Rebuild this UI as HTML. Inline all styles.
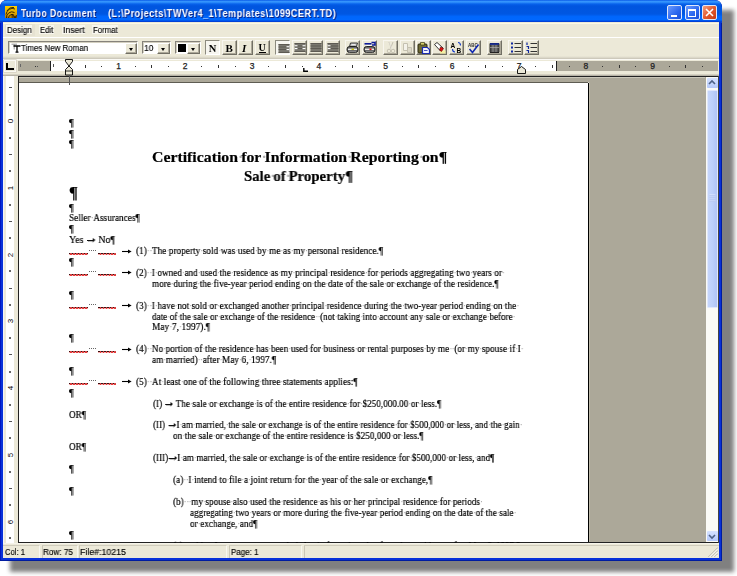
<!DOCTYPE html>
<html><head><meta charset="utf-8"><style>
html,body{margin:0;padding:0;width:737px;height:576px;overflow:hidden;background:#fff;position:relative}
#doctext,.t,.btn svg,.cb svg{will-change:transform}
div{box-sizing:border-box}
.abs{position:absolute}
.t{position:absolute;white-space:pre;line-height:0;transform-origin:0 0}
#doctext .t{-webkit-text-stroke:0.2px #000}
#doctext .t .d{-webkit-text-stroke:0}
.ui{-webkit-text-stroke:0.15px #000}
.tt{text-shadow:1px 1px 0 #0a1f80;letter-spacing:0.5px}
.d{color:#9a9a9a;letter-spacing:-0.6px}
.ttl .d{letter-spacing:-2px;color:#b0b0b0}
.ar{position:relative;color:transparent}
.ar:before{content:'';position:absolute;left:1px;right:2px;top:5.6px;height:1.3px;background:#111}
.ar:after{content:'';position:absolute;right:0.3px;top:3.8px;border-left:3px solid #111;border-top:2.4px solid transparent;border-bottom:2.4px solid transparent}
#shadow{position:absolute;left:10px;top:10px;width:724px;height:562px;background:#808080;filter:blur(2px)}
#win{position:absolute;left:0;top:0;width:722px;height:561px;background:#0831d9;box-shadow:inset -1px -1px 0 #001ca0, inset 1px 0 0 #0016c0;border-radius:7px 7px 0 0;overflow:hidden}
#title{position:absolute;left:0;top:0;width:722px;height:22.5px;border-radius:7px 7px 0 0;
  background:linear-gradient(#0a5ae8 0px,#3a9cff 1.7px,#0762ec 4px,#0055df 6px,#0057e2 14px,#0066fc 16.5px,#0068ff 20px,#0044da 21.2px,#0a3ad0 22.5px)}
#client{position:absolute;left:3px;top:22px;width:715.5px;height:535.5px;background:#ece9d8}
.tbtn{position:absolute;top:5px;width:15px;height:15px;border:1px solid #dfe8fb;border-radius:2px;
  background:linear-gradient(135deg,#6b9bff 0%,#2a66ee 60%,#1b4fd8 100%)}
.menu{position:absolute;height:9px;background:#f8f6ee}
.cb{position:absolute;top:41px;height:13px;background:#fff;border-top:1px solid #85827a;border-left:1px solid #85827a;border-right:1px solid #fff;border-bottom:1px solid #fff;box-shadow:inset 1px 1px 0 #d4d0c0}
.cbb{position:absolute;top:0.5px;right:0;width:12.5px;height:11.5px;background:#ece9d8;border-right:1px solid #716f64;border-bottom:1px solid #716f64;border-top:1px solid #fff;border-left:1px solid #fff;box-shadow:inset -1px -1px 0 #aca899}
.cbb:after{content:'';position:absolute;left:3px;top:4px;border-left:2.5px solid transparent;border-right:2.5px solid transparent;border-top:3px solid #000}
.btn{position:absolute;top:40px;width:15px;height:15px;background:#ece9d8;border-top:1px solid #f8f6ee;border-left:1px solid #f8f6ee;border-right:1px solid #716f64;border-bottom:1px solid #716f64;box-shadow:inset -1px -1px 0 #aca899}
.btn.on{background:#f7f6f0;border-top:1px solid #8c8a7e;border-left:1px solid #8c8a7e;border-right:1px solid #fff;border-bottom:1px solid #fff;box-shadow:none}
.btn svg{position:absolute;left:0;top:0}
.rn{position:absolute;top:61.5px;width:6px;text-align:center;font:8.5px 'Liberation Sans',sans-serif;line-height:8px;color:#222;-webkit-text-stroke:0.25px #222}
.rtk{position:absolute;top:64.5px;width:1px;height:3px;background:#333}
.rdot{position:absolute;top:65.5px;width:1px;height:1px;background:#333}
.vn{position:absolute;left:7px;width:7px;height:6px;font:8px 'Liberation Sans',sans-serif;line-height:6px;text-align:center;color:#000;transform:rotate(-90deg)}
.vtk{position:absolute;left:9px;width:3px;height:1px;background:#555}
.vdot{position:absolute;left:9px;width:2px;height:2px;background:#666}
.ul{position:absolute;height:1px;background:repeating-linear-gradient(90deg,#3a1010 0 1.5px,#d04848 1.5px 3px)}
.sq{position:absolute;height:1.3px;background:repeating-linear-gradient(90deg,#f8a8a8 0 1.5px,#e83838 1.5px 3px)}
.dots{position:absolute;width:8px;height:1px;background:repeating-linear-gradient(90deg,#666 0 1px,transparent 1px 2px)}
.arr{position:absolute;width:10px;height:5px}
.arr svg{display:block}
.sb{position:absolute;top:544.5px;height:13px;border-top:1px solid #d0ccbc;border-left:1px solid #cbc7b7;border-right:1px solid #f8f7f0}
</style></head><body>
<div id="shadow"></div>
<div id="win">
 <div id="title"></div>
 <div class="abs" style="left:5px;top:6px;width:12px;height:12px;background:linear-gradient(#ffd200,#e0a800 60%,#b07800)">
  <svg width="12" height="12" viewBox="0 0 12 12" style="display:block"><g fill="none" stroke="#2a1c00" stroke-width="0.9"><path d="M1.5 12A5.5 5.5 0 0 1 9.5 6.5"/><path d="M1 8.5A6.5 7 0 0 1 10 3"/><path d="M3.5 12A3.5 3.5 0 0 1 8.5 9"/><path d="M2 5A7 7 0 0 1 9 1.5"/></g><path d="M6 8.5H8.5M7.2 8.5V12M8.2 9L9.2 12L10 9.8L10.8 12L11.8 9" stroke="#2a1c00" stroke-width="0.8" fill="none"/></svg>
 </div>
 <div class="tbtn" style="left:667px"><div class="abs" style="left:3px;top:8.7px;width:5.5px;height:2px;background:#fff"></div></div>
 <div class="tbtn" style="left:684.5px"><div class="abs" style="left:2.5px;top:2.5px;width:8px;height:8px;border:1px solid #fff;border-top-width:2px"></div></div>
 <div class="tbtn" style="left:702px;background:linear-gradient(135deg,#f0a080 0%,#e25a30 50%,#c53a12 100%)">
  <svg width="13" height="13" viewBox="0 0 13 13" style="position:absolute;left:0;top:0"><path d="M3 3L10 10M10 3L3 10" stroke="#fff" stroke-width="1.6"/></svg>
 </div>
 <div id="client">
  <!-- menubar (client coords: x-3, y-22) -->
  <div class="abs" style="left:0;top:0.5px;width:715.5px;height:1.3px;background:#fdf9e4"></div>
  <div class="abs" style="left:2px;top:1.5px;width:29.5px;height:12.5px;background:#e6e2d2"></div>
  <div class="menu" style="left:3px;top:3px;width:26px"></div>
  <div class="menu" style="left:36px;top:3px;width:15px"></div>
  <div class="menu" style="left:59px;top:3px;width:23px"></div>
  <div class="menu" style="left:89px;top:3px;width:26px"></div>
  <div class="abs" style="left:0;top:14.5px;width:715.5px;height:1px;background:#fff"></div>
  <!-- toolbar bottom -->
  <div class="abs" style="left:0;top:33.5px;width:715.5px;height:2.5px;background:linear-gradient(#ece9d8,#d6d2c4)"></div>
  <div class="abs" style="left:0;top:36px;width:715.5px;height:1px;background:#cdc9bb"></div>
  <div class="abs" style="left:0;top:37px;width:715.5px;height:1px;background:#faf9f4"></div>
 </div>
 <!-- combos -->
 <div class="cb" style="left:8px;width:130px"><div class="cbb"></div>
   <svg width="10" height="10" viewBox="0 0 10 10" style="position:absolute;left:1.5px;top:0.5px"><path d="M0.5 1.2H6M3.2 1.2V6.5" stroke="#8a8a8a" stroke-width="0.9" fill="none"/><path d="M2.5 3H9.5M6 3V9.2M4.5 9.2H7.5" stroke="#000" stroke-width="1.3" fill="none"/></svg>
 </div>
 <div class="cb" style="left:141.5px;width:29px"><div class="cbb"></div></div>
 <div class="cb" style="left:174.5px;width:26px"><div class="abs" style="left:2px;top:1.5px;width:8px;height:8px;background:#000"></div><div class="cbb"></div></div>
 <!-- toolbar buttons -->
 <div class="btn on" style="left:205px"><svg width="13" height="13"><text x="2.8" y="11.2" font-family="Liberation Serif" font-size="10.5" font-weight="bold">N</text></svg></div>
 <div class="btn" style="left:221.5px"><svg width="13" height="13"><text x="2.5" y="11" font-family="Liberation Serif" font-size="11" font-weight="bold">B</text></svg></div>
 <div class="btn" style="left:238px"><svg width="13" height="13"><text x="3" y="11" font-family="Liberation Serif" font-size="11" font-weight="bold" font-style="italic">I</text></svg></div>
 <div class="btn" style="left:254.5px"><svg width="13" height="13"><text x="2.5" y="9.8" font-family="Liberation Serif" font-size="10" font-weight="bold">U</text><path d="M3 11.5H10" stroke="#000" stroke-width="1"/></svg></div>
 <div class="btn on" style="left:275px"><div style="position:absolute;left:0.5px;top:1px"><svg width="13" height="13"><rect x="1.5" y="2" width="11" height="9" fill="#7a7870"/><path d="M1.5 2.5H12.5M1.5 5H12.5M1.5 7.5H12.5M1.5 10.5H12.5" stroke="#55534b" stroke-width="0.8"/><rect x="9.5" y="4.2" width="3" height="1.1" fill="#fff"/><rect x="9.5" y="7.0" width="3" height="1.1" fill="#fff"/></svg></div></div>
 <div class="btn" style="left:291.5px"><svg width="13" height="13"><rect x="1.5" y="2" width="11" height="9" fill="#7a7870"/><path d="M1.5 2.5H12.5M1.5 5H12.5M1.5 7.5H12.5M1.5 10.5H12.5" stroke="#55534b" stroke-width="0.8"/><rect x="9.5" y="4.2" width="3" height="1.1" fill="#fff"/><rect x="1.5" y="4.2" width="3" height="1.1" fill="#fff"/><rect x="9.5" y="7.0" width="3" height="1.1" fill="#fff"/><rect x="1.5" y="7.0" width="3" height="1.1" fill="#fff"/></svg></div>
 <div class="btn" style="left:308px"><svg width="13" height="13"><rect x="1.5" y="2" width="11" height="9" fill="#7a7870"/><path d="M1.5 2.5H12.5M1.5 5H12.5M1.5 7.5H12.5M1.5 10.5H12.5" stroke="#55534b" stroke-width="0.8"/></svg></div>
 <div class="btn" style="left:324.5px"><svg width="13" height="13"><rect x="1.5" y="2" width="11" height="9" fill="#7a7870"/><path d="M1.5 2.5H12.5M1.5 5H12.5M1.5 7.5H12.5M1.5 10.5H12.5" stroke="#55534b" stroke-width="0.8"/><rect x="1.5" y="4.2" width="3" height="1.1" fill="#fff"/><rect x="1.5" y="7.0" width="3" height="1.1" fill="#fff"/></svg></div>
 <div class="btn" style="left:345px"><svg width="13" height="13"><path d="M4.5 2L11.5 2L10.5 5.5L3.5 5.5Z" fill="#bdbdbd" stroke="#2a2a2a" stroke-width="0.9"/><path d="M5.5 3.5H9.5" stroke="#fff" stroke-width="0.7"/><rect x="1" y="5.5" width="11" height="6" rx="2.6" fill="#6a6a6a" stroke="#1a1a1a" stroke-width="0.9"/><path d="M2 8.3H11" stroke="#f4f4f4" stroke-width="1.3"/><path d="M5.5 8.3H8" stroke="#c8c000" stroke-width="1.3"/><path d="M3 10.8H10" stroke="#9a9a9a" stroke-width="0.8"/></svg></div>
 <div class="btn" style="left:361.5px"><svg width="13" height="13"><path d="M1.5 2.8H8.5" stroke="#0c1a9a" stroke-width="1.6"/><path d="M8.5 1.5H12V4H9" stroke="#0c1a9a" stroke-width="1.5" fill="none"/><path d="M3.5 4.5H8" stroke="#fff" stroke-width="0.8"/><rect x="1" y="5.5" width="11" height="6" rx="2.6" fill="#6a6a6a" stroke="#1a1a1a" stroke-width="0.9"/><path d="M2 8.3H11" stroke="#f4f4f4" stroke-width="1.3"/><path d="M6.5 8.3H8.5" stroke="#e00000" stroke-width="1.5"/><path d="M3 10.8H10" stroke="#9a9a9a" stroke-width="0.8"/></svg></div>
 <div class="btn" style="left:383px"><svg width="13" height="13"><path d="M5 1L7.5 7.5M9 1L6.5 7.5" stroke="#c4c0b0" stroke-width="1"/><circle cx="5" cy="10" r="1.8" fill="none" stroke="#c4c0b0" stroke-width="1"/><circle cx="9" cy="10" r="1.8" fill="none" stroke="#c4c0b0" stroke-width="1"/><path d="M5.5 1.5L8 8" stroke="#fff" stroke-width="0.5"/></svg></div>
 <div class="btn" style="left:399.5px"><svg width="13" height="13"><path d="M2.5 2.5H6.5V9.5H2.5Z" fill="#f4f2ea" stroke="#c4c0b0"/><path d="M6.5 6.5H10.5V11.5H6.5Z" fill="#dcd8c8" stroke="#c4c0b0"/></svg></div>
 <div class="btn" style="left:416px"><svg width="13" height="13"><rect x="1" y="3" width="9" height="9" rx="1" fill="#6e6a36" stroke="#1e1c08" stroke-width="0.9"/><path d="M3.5 1.5H7.5V4H3.5Z" fill="#d8d070" stroke="#3a3610" stroke-width="0.7"/><path d="M5.5 6.5H10.5L12.5 8.5V12.5H5.5Z" fill="#f4f4ff" stroke="#1a2ab0" stroke-width="1.2"/><path d="M7 9.5H10.5" stroke="#1a2ab0" stroke-width="0.8"/></svg></div>
 <div class="btn" style="left:432px"><svg width="13" height="13"><path d="M7 9.5H12.5V12.5H7Z" fill="#f4f0a0"/><path d="M1.5 3.5L4 1.5L10 7L7.5 10Z" fill="#fff" stroke="#222" stroke-width="0.9"/><path d="M7.5 6L10.5 7.5L8.5 10.5L6.5 9Z" fill="#e01010" stroke="#600" stroke-width="0.6"/></svg></div>
 <div class="btn" style="left:449px"><svg width="13" height="13"><text x="0.5" y="6.5" font-family="Liberation Sans" font-size="6.5" font-weight="bold">A</text><text x="6.5" y="12" font-family="Liberation Sans" font-size="6.5" font-weight="bold">B</text><path d="M8 1.5Q10.5 1.5 10.5 4.5M2.5 8Q2.5 11 5 11" stroke="#1038c8" fill="none" stroke-width="1.1"/></svg></div>
 <div class="btn" style="left:466px"><svg width="13" height="13"><text x="1" y="5.5" font-family="Liberation Sans" font-size="4.5" font-weight="bold" fill="#333">ABC</text><path d="M2.5 8L5.5 11.5L11.5 3.5" stroke="#1028b0" stroke-width="1.6" fill="none"/></svg></div>
 <div class="btn" style="left:487px"><svg width="13" height="13"><path d="M2 2.5H11V11.5H2Z" fill="#555" stroke="#222"/><path d="M2 3H11" stroke="#1028a0" stroke-width="1.5"/><path d="M5 4V11M8 4V11M2 6.5H11" stroke="#bbb" stroke-width="0.6"/></svg></div>
 <div class="btn" style="left:507.5px"><svg width="13" height="13"><path d="M2 2.5H4M2 6.5H4M2 10.5H4" stroke="#1028a0" stroke-width="2"/><path d="M5.5 2.5H12M5.5 6.5H12M5.5 10.5H12" stroke="#333" stroke-width="1"/></svg></div>
 <div class="btn" style="left:524px"><svg width="13" height="13"><path d="M2 1.5V4M1.5 5.5H3.5V8M1.5 9.5H3.5V12" stroke="#1028a0" stroke-width="1.2" fill="none"/><path d="M5.5 2.5H12M5.5 6.5H12M5.5 10.5H12" stroke="#333" stroke-width="1"/></svg></div>

 <!-- ruler -->
 <div class="abs" style="left:4px;top:60px;width:12px;height:12px;background:#ece9d8;border:1px solid #fbfaf4;box-shadow:0 0 0 0.6px #cfcbbb">
   <div class="abs" style="left:1.25px;top:1.8px;width:1.5px;height:7px;background:#000"></div>
   <div class="abs" style="left:1.25px;top:7.2px;width:7.5px;height:1.6px;background:#000"></div>
 </div>
 <div class="abs" style="left:3px;top:73.5px;width:715.5px;height:2.5px;background:linear-gradient(#e4e0d0,#a8a498)"></div>
 <div class="abs" style="left:17.5px;top:61px;width:700px;height:9.5px;background:#fff"></div>
 <div class="abs" style="left:17.5px;top:61px;width:33px;height:9.5px;background:#aca899"></div>
 <div class="abs" style="left:50px;top:61px;width:1px;height:9.5px;background:#222"></div>
 <div class="abs" style="left:555.5px;top:61px;width:162px;height:9.5px;background:#aca899"></div>
 <div class="abs" style="left:555.5px;top:61px;width:1px;height:9.5px;background:#222"></div>
 <div class="abs" style="left:20px;top:64px;width:1px;height:3px;background:#666"></div>
 <div class="abs" style="left:36.5px;top:65.5px;width:1px;height:1px;background:#555"></div>
 <div class="abs" style="left:53px;top:63.5px;width:1px;height:3.5px;background:#555"></div>
 <div class="rdot" style="left:34.6px"></div>
<div class="rdot" style="left:67.9px"></div>
<div class="rtk" style="left:84.6px"></div>
<div class="rdot" style="left:101.3px"></div>
<div class="rn" style="left:115.5px">1</div>
<div class="rdot" style="left:134.7px"></div>
<div class="rtk" style="left:151.4px"></div>
<div class="rdot" style="left:168.1px"></div>
<div class="rn" style="left:182.2px">2</div>
<div class="rdot" style="left:201.4px"></div>
<div class="rtk" style="left:218.1px"></div>
<div class="rdot" style="left:234.8px"></div>
<div class="rn" style="left:249.0px">3</div>
<div class="rdot" style="left:268.2px"></div>
<div class="rtk" style="left:284.9px"></div>
<div class="rdot" style="left:301.6px"></div>
<div class="rn" style="left:315.8px">4</div>
<div class="rdot" style="left:334.9px"></div>
<div class="rtk" style="left:351.6px"></div>
<div class="rdot" style="left:368.3px"></div>
<div class="rn" style="left:382.5px">5</div>
<div class="rdot" style="left:401.7px"></div>
<div class="rtk" style="left:418.4px"></div>
<div class="rdot" style="left:435.1px"></div>
<div class="rn" style="left:449.2px">6</div>
<div class="rdot" style="left:468.4px"></div>
<div class="rtk" style="left:485.1px"></div>
<div class="rdot" style="left:501.8px"></div>
<div class="rn" style="left:516.0px">7</div>
<div class="rdot" style="left:535.2px"></div>
<div class="rtk" style="left:551.9px"></div>
<div class="rdot" style="left:568.6px"></div>
<div class="rn" style="left:582.8px">8</div>
<div class="rdot" style="left:601.9px"></div>
<div class="rtk" style="left:618.6px"></div>
<div class="rdot" style="left:635.3px"></div>
<div class="rn" style="left:649.5px">9</div>
<div class="rdot" style="left:668.7px"></div>
<div class="rtk" style="left:685.4px"></div>
<div class="rdot" style="left:702.1px"></div>
 <!-- indent markers -->
 <svg class="abs" style="left:65px;top:59px" width="8" height="17" viewBox="0 0 8 17"><path d="M0.5 0.5H7.5V2.5L4 7L7.5 10.5V16H0.5V10.5L4 7L0.5 2.5Z" fill="#ece9d8" stroke="#000" stroke-width="0.9"/><path d="M0.5 12H7.5" stroke="#000" stroke-width="0.8"/></svg>
 <svg class="abs" style="left:517px;top:66px" width="9" height="8" viewBox="0 0 9 8"><path d="M0.5 7.5V3.5L4.5 0.5L8.5 3.5V7.5Z" fill="#ece9d8" stroke="#000" stroke-width="0.9"/></svg>
 <svg class="abs" style="left:302.5px;top:67.5px" width="5" height="5" viewBox="0 0 5 5"><path d="M0.8 0V3.2H5" stroke="#000" stroke-width="1.4" fill="none"/></svg>

 <!-- doc area -->
 <div class="abs" style="left:3px;top:76px;width:715.5px;height:467px;background:#aca899"></div>
 <div class="abs" style="left:3px;top:76px;width:15px;height:467px;background:#ece9d8"></div>
 <div class="abs" style="left:3px;top:76px;width:0.8px;height:467px;background:#f4f4f8"></div>
 <div class="abs" style="left:6px;top:76px;width:8px;height:467px;background:#fff"></div>
 <div class="vtk" style="top:87.3px"></div>
<div class="vdot" style="top:103.5px"></div>
<div class="vn" style="top:118.2px">0</div>
<div class="vdot" style="top:136.9px"></div>
<div class="vtk" style="top:154.1px"></div>
<div class="vdot" style="top:170.3px"></div>
<div class="vn" style="top:184.9px">1</div>
<div class="vdot" style="top:203.6px"></div>
<div class="vtk" style="top:220.8px"></div>
<div class="vdot" style="top:237.0px"></div>
<div class="vn" style="top:251.7px">2</div>
<div class="vdot" style="top:270.4px"></div>
<div class="vtk" style="top:287.6px"></div>
<div class="vdot" style="top:303.8px"></div>
<div class="vn" style="top:318.4px">3</div>
<div class="vdot" style="top:337.1px"></div>
<div class="vtk" style="top:354.3px"></div>
<div class="vdot" style="top:370.5px"></div>
<div class="vn" style="top:385.2px">4</div>
<div class="vdot" style="top:403.9px"></div>
<div class="vtk" style="top:421.1px"></div>
<div class="vdot" style="top:437.3px"></div>
<div class="vn" style="top:451.9px">5</div>
<div class="vdot" style="top:470.6px"></div>
<div class="vtk" style="top:487.8px"></div>
<div class="vdot" style="top:504.0px"></div>
<div class="vn" style="top:518.7px">6</div>
<div class="vdot" style="top:537.4px"></div>
 <div class="abs" style="left:18px;top:76px;width:700.5px;height:1px;background:#222"></div>
 <div class="abs" style="left:18px;top:76px;width:1px;height:467px;background:#222"></div>
 <div class="abs" style="left:19px;top:77px;width:686px;height:1px;background:#c9c6b8"></div>
 <div class="abs" style="left:19px;top:82px;width:569px;height:1px;background:#5e5c52"></div>
 <div class="abs" style="left:19px;top:83px;width:569px;height:460px;background:#fff;overflow:hidden"></div>
 <div class="abs" style="left:588px;top:82px;width:1px;height:461px;background:#000"></div>
 <div class="abs" style="left:589px;top:83px;width:1px;height:460px;background:#bcb8a8"></div>
 <div class="abs" style="left:588px;top:82px;width:1px;height:1px;background:#d8d4c8"></div>
 <div class="abs" style="left:69px;top:75px;width:1px;height:10px;background:#555"></div>
 <!-- scrollbar -->
 <div class="abs" style="left:705.5px;top:77px;width:13px;height:466px;background:#fafaf6"></div>
 <div class="abs" style="left:707px;top:78px;width:10.5px;height:10px;background:linear-gradient(#d6e2ff,#b4c8fa);border-radius:1px">
   <svg width="10" height="10" viewBox="0 0 10 10" style="position:absolute;left:0;top:0"><path d="M2 6L5 3L8 6" stroke="#4d6185" stroke-width="1.6" fill="none"/></svg>
 </div>
 <div class="abs" style="left:707px;top:89.5px;width:10.5px;height:218px;background:linear-gradient(90deg,#c6d6fc,#bcd0fa 50%,#b0c4f6);border:1px solid #e0e8fc;border-radius:1px"></div>
 <svg class="abs" style="left:709px;top:194px" width="7" height="8" viewBox="0 0 7 8"><path d="M0.5 1H6.5M0.5 3H6.5M0.5 5H6.5M0.5 7H6.5" stroke="#eef3ff" stroke-width="0.8"/><path d="M0.5 1.8H6.5M0.5 3.8H6.5M0.5 5.8H6.5M0.5 7.8H6.5" stroke="#9cb2ea" stroke-width="0.6"/></svg>
 <div class="abs" style="left:707px;top:531px;width:10.5px;height:10px;background:linear-gradient(#d6e2ff,#b4c8fa);border-radius:1px">
   <svg width="10" height="10" viewBox="0 0 10 10" style="position:absolute;left:0;top:0"><path d="M2 4L5 7L8 4" stroke="#4d6185" stroke-width="1.6" fill="none"/></svg>
 </div>
 <div class="abs" style="left:18px;top:542px;width:700.5px;height:1px;background:#222"></div>
 <div class="abs" style="left:717.5px;top:76px;width:1px;height:467px;background:#444"></div>
 <!-- status bar -->
 <div class="abs" style="left:3px;top:543px;width:715.5px;height:14.5px;background:#ece9d8"></div>
 <div class="abs" style="left:3px;top:543px;width:715.5px;height:1px;background:#f6f4ea"></div>
 <div class="sb" style="left:3px;width:37px;border-left:none"></div>
 <div class="sb" style="left:42px;width:35.5px"></div>
 <div class="sb" style="left:79px;width:147.5px"></div>
 <div class="sb" style="left:228.5px;width:73.5px"></div>
 <div class="sb" style="left:304px;width:414.5px;border-right:none"></div>
 <svg class="abs" style="left:707px;top:546px" width="11" height="11" viewBox="0 0 11 11"><g stroke-width="1"><path d="M11 1.5L1.5 11" stroke="#a8a494"/><path d="M11 2.5L2.5 11" stroke="#fff"/><path d="M11 4.5L4.5 11" stroke="#a8a494"/><path d="M11 5.5L5.5 11" stroke="#fff"/><path d="M11 7.5L7.5 11" stroke="#a8a494"/><path d="M11 8.5L8.5 11" stroke="#fff"/></g></svg>
</div>
<div id="doctext" style="position:absolute;left:0;top:0;width:588px;height:543px;overflow:hidden">
<div class="ul" style="left:69px;top:253px;width:19.0px"></div>
<div class="sq" style="left:69px;top:254px;width:19.0px"></div>
<div class="ul" style="left:97.7px;top:253px;width:17.9px"></div>
<div class="sq" style="left:97.7px;top:254px;width:17.9px"></div>
<div class="dots" style="left:89px;top:249.5px"></div>
<div class="arr" style="left:121.5px;top:248.5px"><svg width="10" height="5" viewBox="0 0 10 5"><path d="M0 2.5H8" stroke="#000" stroke-width="1.1"/><path d="M6 0.5L9.6 2.5L6 4.5Z" fill="#000"/></svg></div>
<div class="ul" style="left:69px;top:274px;width:19.0px"></div>
<div class="sq" style="left:69px;top:275px;width:19.0px"></div>
<div class="ul" style="left:97.7px;top:274px;width:17.9px"></div>
<div class="sq" style="left:97.7px;top:275px;width:17.9px"></div>
<div class="dots" style="left:89px;top:270.5px"></div>
<div class="arr" style="left:121.5px;top:269.5px"><svg width="10" height="5" viewBox="0 0 10 5"><path d="M0 2.5H8" stroke="#000" stroke-width="1.1"/><path d="M6 0.5L9.6 2.5L6 4.5Z" fill="#000"/></svg></div>
<div class="ul" style="left:69px;top:307px;width:19.0px"></div>
<div class="sq" style="left:69px;top:308px;width:19.0px"></div>
<div class="ul" style="left:97.7px;top:307px;width:17.9px"></div>
<div class="sq" style="left:97.7px;top:308px;width:17.9px"></div>
<div class="dots" style="left:89px;top:303.5px"></div>
<div class="arr" style="left:121.5px;top:302.5px"><svg width="10" height="5" viewBox="0 0 10 5"><path d="M0 2.5H8" stroke="#000" stroke-width="1.1"/><path d="M6 0.5L9.6 2.5L6 4.5Z" fill="#000"/></svg></div>
<div class="ul" style="left:69px;top:351px;width:19.0px"></div>
<div class="sq" style="left:69px;top:352px;width:19.0px"></div>
<div class="ul" style="left:97.7px;top:351px;width:17.9px"></div>
<div class="sq" style="left:97.7px;top:352px;width:17.9px"></div>
<div class="dots" style="left:89px;top:347.5px"></div>
<div class="arr" style="left:121.5px;top:346.5px"><svg width="10" height="5" viewBox="0 0 10 5"><path d="M0 2.5H8" stroke="#000" stroke-width="1.1"/><path d="M6 0.5L9.6 2.5L6 4.5Z" fill="#000"/></svg></div>
<div class="ul" style="left:69px;top:383px;width:19.0px"></div>
<div class="sq" style="left:69px;top:384px;width:19.0px"></div>
<div class="ul" style="left:97.7px;top:383px;width:17.9px"></div>
<div class="sq" style="left:97.7px;top:384px;width:17.9px"></div>
<div class="dots" style="left:89px;top:379.5px"></div>
<div class="arr" style="left:121.5px;top:378.5px"><svg width="10" height="5" viewBox="0 0 10 5"><path d="M0 2.5H8" stroke="#000" stroke-width="1.1"/><path d="M6 0.5L9.6 2.5L6 4.5Z" fill="#000"/></svg></div>
<div class="t" id="t0" style="left:69.00px;top:123.00px;font-size:10.5px;font-family:'Liberation Serif', serif;color:#000;">¶</div>
<div class="t" id="t1" style="left:69.00px;top:134.00px;font-size:10.5px;font-family:'Liberation Serif', serif;color:#000;">¶</div>
<div class="t" id="t2" style="left:69.00px;top:144.00px;font-size:10.5px;font-family:'Liberation Serif', serif;color:#000;">¶</div>
<div class="t ttl" id="t3" style="left:151.50px;top:157.05px;font-size:15px;font-family:'Liberation Serif', serif;color:#000;font-weight:bold;transform:scaleX(1.0537);">Certification<span class="d">·</span>for<span class="d">·</span>Information<span class="d">·</span>Reporting<span class="d">·</span>on¶</div>
<div class="t ttl" id="t4" style="left:244.00px;top:175.55px;font-size:15px;font-family:'Liberation Serif', serif;color:#000;font-weight:bold;transform:scaleX(0.9863);">Sale<span class="d">·</span>of<span class="d">·</span>Property¶</div>
<div class="t" id="t5" style="left:68.50px;top:193.16px;font-size:16.5px;font-family:'Liberation Serif', serif;color:#000;font-weight:bold;">¶</div>
<div class="t" id="t6" style="left:69.00px;top:208.00px;font-size:10.5px;font-family:'Liberation Serif', serif;color:#000;">¶</div>
<div class="t" id="t7" style="left:69.00px;top:218.00px;font-size:10.5px;font-family:'Liberation Serif', serif;color:#000;transform:scaleX(0.8839);">Seller<span class="d">·</span>Assurances¶</div>
<div class="t" id="t8" style="left:69.00px;top:229.00px;font-size:10.5px;font-family:'Liberation Serif', serif;color:#000;">¶</div>
<div class="t" id="t9" style="left:69.00px;top:240.00px;font-size:10.5px;font-family:'Liberation Serif', serif;color:#000;transform:scaleX(0.9460);">Yes <span class="ar">→</span> No¶</div>
<div class="t" id="t10" style="left:136.00px;top:251.00px;font-size:10.5px;font-family:'Liberation Serif', serif;color:#000;transform:scaleX(0.8814);">(1)<span class="d">·</span><span class="d">·</span>The<span class="d">·</span>property<span class="d">·</span>sold<span class="d">·</span>was<span class="d">·</span>used<span class="d">·</span>by<span class="d">·</span>me<span class="d">·</span>as<span class="d">·</span>my<span class="d">·</span>personal<span class="d">·</span>residence.¶</div>
<div class="t" id="t11" style="left:69.00px;top:262.00px;font-size:10.5px;font-family:'Liberation Serif', serif;color:#000;">¶</div>
<div class="t" id="t12" style="left:136.00px;top:273.00px;font-size:10.5px;font-family:'Liberation Serif', serif;color:#000;transform:scaleX(0.8745);">(2)<span class="d">·</span><span class="d">·</span>I<span class="d">·</span>owned<span class="d">·</span>and<span class="d">·</span>used<span class="d">·</span>the<span class="d">·</span>residence<span class="d">·</span>as<span class="d">·</span>my<span class="d">·</span>principal<span class="d">·</span>residence<span class="d">·</span>for<span class="d">·</span>periods<span class="d">·</span>aggregating<span class="d">·</span>two<span class="d">·</span>years<span class="d">·</span>or<span class="d">·</span></div>
<div class="t" id="t13" style="left:152.00px;top:284.00px;font-size:10.5px;font-family:'Liberation Serif', serif;color:#000;transform:scaleX(0.8722);">more<span class="d">·</span>during<span class="d">·</span>the<span class="d">·</span>five-year<span class="d">·</span>period<span class="d">·</span>ending<span class="d">·</span>on<span class="d">·</span>the<span class="d">·</span>date<span class="d">·</span>of<span class="d">·</span>the<span class="d">·</span>sale<span class="d">·</span>or<span class="d">·</span>exchange<span class="d">·</span>of<span class="d">·</span>the<span class="d">·</span>residence.¶</div>
<div class="t" id="t14" style="left:69.00px;top:295.00px;font-size:10.5px;font-family:'Liberation Serif', serif;color:#000;">¶</div>
<div class="t" id="t15" style="left:136.00px;top:306.00px;font-size:10.5px;font-family:'Liberation Serif', serif;color:#000;transform:scaleX(0.8752);">(3)<span class="d">·</span><span class="d">·</span>I<span class="d">·</span>have<span class="d">·</span>not<span class="d">·</span>sold<span class="d">·</span>or<span class="d">·</span>exchanged<span class="d">·</span>another<span class="d">·</span>principal<span class="d">·</span>residence<span class="d">·</span>during<span class="d">·</span>the<span class="d">·</span>two-year<span class="d">·</span>period<span class="d">·</span>ending<span class="d">·</span>on<span class="d">·</span>the<span class="d">·</span></div>
<div class="t" id="t16" style="left:152.00px;top:317.00px;font-size:10.5px;font-family:'Liberation Serif', serif;color:#000;transform:scaleX(0.8665);">date<span class="d">·</span>of<span class="d">·</span>the<span class="d">·</span>sale<span class="d">·</span>or<span class="d">·</span>exchange<span class="d">·</span>of<span class="d">·</span>the<span class="d">·</span>residence<span class="d">·</span><span class="d">·</span>(not<span class="d">·</span>taking<span class="d">·</span>into<span class="d">·</span>account<span class="d">·</span>any<span class="d">·</span>sale<span class="d">·</span>or<span class="d">·</span>exchange<span class="d">·</span>before<span class="d">·</span></div>
<div class="t" id="t17" style="left:152.00px;top:327.00px;font-size:10.5px;font-family:'Liberation Serif', serif;color:#000;transform:scaleX(0.8947);">May<span class="d">·</span>7,<span class="d">·</span>1997).¶</div>
<div class="t" id="t18" style="left:69.00px;top:338.00px;font-size:10.5px;font-family:'Liberation Serif', serif;color:#000;">¶</div>
<div class="t" id="t19" style="left:136.00px;top:349.00px;font-size:10.5px;font-family:'Liberation Serif', serif;color:#000;transform:scaleX(0.8763);">(4)<span class="d">·</span><span class="d">·</span>No<span class="d">·</span>portion<span class="d">·</span>of<span class="d">·</span>the<span class="d">·</span>residence<span class="d">·</span>has<span class="d">·</span>been<span class="d">·</span>used<span class="d">·</span>for<span class="d">·</span>business<span class="d">·</span>or<span class="d">·</span>rental<span class="d">·</span>purposes<span class="d">·</span>by<span class="d">·</span>me<span class="d">·</span><span class="d">·</span>(or<span class="d">·</span>my<span class="d">·</span>spouse<span class="d">·</span>if<span class="d">·</span>I<span class="d">·</span></div>
<div class="t" id="t20" style="left:152.00px;top:360.00px;font-size:10.5px;font-family:'Liberation Serif', serif;color:#000;transform:scaleX(0.8784);">am<span class="d">·</span>married)<span class="d">·</span><span class="d">·</span>after<span class="d">·</span>May<span class="d">·</span>6,<span class="d">·</span>1997.¶</div>
<div class="t" id="t21" style="left:69.00px;top:371.00px;font-size:10.5px;font-family:'Liberation Serif', serif;color:#000;">¶</div>
<div class="t" id="t22" style="left:136.00px;top:382.00px;font-size:10.5px;font-family:'Liberation Serif', serif;color:#000;transform:scaleX(0.8810);">(5)<span class="d">·</span><span class="d">·</span>At<span class="d">·</span>least<span class="d">·</span>one<span class="d">·</span>of<span class="d">·</span>the<span class="d">·</span>following<span class="d">·</span>three<span class="d">·</span>statements<span class="d">·</span>applies:¶</div>
<div class="t" id="t23" style="left:69.00px;top:393.00px;font-size:10.5px;font-family:'Liberation Serif', serif;color:#000;">¶</div>
<div class="t" id="t24" style="left:152.80px;top:404.00px;font-size:10.5px;font-family:'Liberation Serif', serif;color:#000;transform:scaleX(0.8712);">(I) <span class="ar">→</span> The<span class="d">·</span>sale<span class="d">·</span>or<span class="d">·</span>exchange<span class="d">·</span>is<span class="d">·</span>of<span class="d">·</span>the<span class="d">·</span>entire<span class="d">·</span>residence<span class="d">·</span>for<span class="d">·</span>$250,000.00<span class="d">·</span>or<span class="d">·</span>less.¶</div>
<div class="t" id="t25" style="left:69.00px;top:415.00px;font-size:10.5px;font-family:'Liberation Serif', serif;color:#000;transform:scaleX(0.8781);">OR¶</div>
<div class="t" id="t26" style="left:152.80px;top:425.00px;font-size:10.5px;font-family:'Liberation Serif', serif;color:#000;transform:scaleX(0.8616);">(II) <span class="ar">→</span>I<span class="d">·</span>am<span class="d">·</span>married,<span class="d">·</span>the<span class="d">·</span>sale<span class="d">·</span>or<span class="d">·</span>exchange<span class="d">·</span>is<span class="d">·</span>of<span class="d">·</span>the<span class="d">·</span>entire<span class="d">·</span>residence<span class="d">·</span>for<span class="d">·</span>$500,000<span class="d">·</span>or<span class="d">·</span>less,<span class="d">·</span>and<span class="d">·</span>the<span class="d">·</span>gain<span class="d">·</span></div>
<div class="t" id="t27" style="left:173.00px;top:436.00px;font-size:10.5px;font-family:'Liberation Serif', serif;color:#000;transform:scaleX(0.8748);">on<span class="d">·</span>the<span class="d">·</span>sale<span class="d">·</span>or<span class="d">·</span>exchange<span class="d">·</span>of<span class="d">·</span>the<span class="d">·</span>entire<span class="d">·</span>residence<span class="d">·</span>is<span class="d">·</span>$250,000<span class="d">·</span>or<span class="d">·</span>less.¶</div>
<div class="t" id="t28" style="left:69.00px;top:447.00px;font-size:10.5px;font-family:'Liberation Serif', serif;color:#000;transform:scaleX(0.8781);">OR¶</div>
<div class="t" id="t29" style="left:152.80px;top:458.00px;font-size:10.5px;font-family:'Liberation Serif', serif;color:#000;transform:scaleX(0.8649);">(III)<span class="ar">→</span>I<span class="d">·</span>am<span class="d">·</span>married,<span class="d">·</span>the<span class="d">·</span>sale<span class="d">·</span>or<span class="d">·</span>exchange<span class="d">·</span>is<span class="d">·</span>of<span class="d">·</span>the<span class="d">·</span>entire<span class="d">·</span>residence<span class="d">·</span>for<span class="d">·</span>$500,000<span class="d">·</span>or<span class="d">·</span>less,<span class="d">·</span>and¶</div>
<div class="t" id="t30" style="left:69.00px;top:469.00px;font-size:10.5px;font-family:'Liberation Serif', serif;color:#000;">¶</div>
<div class="t" id="t31" style="left:173.00px;top:480.00px;font-size:10.5px;font-family:'Liberation Serif', serif;color:#000;transform:scaleX(0.8762);">(a)<span class="d">·</span><span class="d">·</span>I<span class="d">·</span>intend<span class="d">·</span>to<span class="d">·</span>file<span class="d">·</span>a<span class="d">·</span>joint<span class="d">·</span>return<span class="d">·</span>for<span class="d">·</span>the<span class="d">·</span>year<span class="d">·</span>of<span class="d">·</span>the<span class="d">·</span>sale<span class="d">·</span>or<span class="d">·</span>exchange,¶</div>
<div class="t" id="t32" style="left:69.00px;top:491.00px;font-size:10.5px;font-family:'Liberation Serif', serif;color:#000;">¶</div>
<div class="t" id="t33" style="left:173.00px;top:502.00px;font-size:10.5px;font-family:'Liberation Serif', serif;color:#000;transform:scaleX(0.8699);">(b)<span class="d">·</span><span class="d">·</span><span class="d">·</span>my<span class="d">·</span>spouse<span class="d">·</span>also<span class="d">·</span>used<span class="d">·</span>the<span class="d">·</span>residence<span class="d">·</span>as<span class="d">·</span>his<span class="d">·</span>or<span class="d">·</span>her<span class="d">·</span>principal<span class="d">·</span>residence<span class="d">·</span>for<span class="d">·</span>periods<span class="d">·</span></div>
<div class="t" id="t34" style="left:190.20px;top:513.00px;font-size:10.5px;font-family:'Liberation Serif', serif;color:#000;transform:scaleX(0.8657);">aggregating<span class="d">·</span>two<span class="d">·</span>years<span class="d">·</span>or<span class="d">·</span>more<span class="d">·</span>during<span class="d">·</span>the<span class="d">·</span>five-year<span class="d">·</span>period<span class="d">·</span>ending<span class="d">·</span>on<span class="d">·</span>the<span class="d">·</span>date<span class="d">·</span>of<span class="d">·</span>the<span class="d">·</span>sale<span class="d">·</span></div>
<div class="t" id="t35" style="left:190.20px;top:524.00px;font-size:10.5px;font-family:'Liberation Serif', serif;color:#000;transform:scaleX(0.8767);">or<span class="d">·</span>exchange,<span class="d">·</span>and¶</div>
<div class="t" id="t36" style="left:69.00px;top:535.00px;font-size:10.5px;font-family:'Liberation Serif', serif;color:#000;">¶</div>
<div class="t" id="t37" style="left:173.00px;top:546.00px;font-size:10.5px;font-family:'Liberation Serif', serif;color:#000;transform:scaleX(0.8405);">(c)<span class="d">·</span><span class="d">·</span>neither<span class="d">·</span>I<span class="d">·</span>nor<span class="d">·</span>my<span class="d">·</span>spouse<span class="d">·</span>excluded<span class="d">·</span>gain<span class="d">·</span>from<span class="d">·</span>the<span class="d">·</span>sale<span class="d">·</span>of<span class="d">·</span>another<span class="d">·</span>residence<span class="d">·</span>after<span class="d">·</span>May<span class="d">·</span>6,<span class="d">·</span>1997.¶</div>
</div>
<div class="t tt" id="t38" style="left:20.50px;top:14.00px;font-size:10px;font-family:'Liberation Sans', sans-serif;color:#fff;font-weight:bold;transform:scaleX(0.8706);">Turbo Document</div>
<div class="t tt" id="t39" style="left:108.30px;top:14.00px;font-size:10px;font-family:'Liberation Sans', sans-serif;color:#fff;font-weight:bold;transform:scaleX(0.9140);">(L:\Projects\TWVer4_1\Templates\1099CERT.TD)</div>
<div class="t ui" id="t40" style="left:7.00px;top:29.55px;font-size:9px;font-family:'Liberation Sans', sans-serif;color:#000;transform:scaleX(0.8817);">Design</div>
<div class="t ui" id="t41" style="left:39.70px;top:29.55px;font-size:9px;font-family:'Liberation Sans', sans-serif;color:#000;transform:scaleX(0.8508);">Edit</div>
<div class="t ui" id="t42" style="left:62.60px;top:29.55px;font-size:9px;font-family:'Liberation Sans', sans-serif;color:#000;transform:scaleX(0.9638);">Insert</div>
<div class="t ui" id="t43" style="left:93.10px;top:29.55px;font-size:9px;font-family:'Liberation Sans', sans-serif;color:#000;transform:scaleX(0.8662);">Format</div>
<div class="t ui" id="t44" style="left:21.00px;top:48.15px;font-size:9px;font-family:'Liberation Sans', sans-serif;color:#000;transform:scaleX(0.8794);">Times New Roman</div>
<div class="t ui" id="t45" style="left:144.00px;top:48.17px;font-size:9.5px;font-family:'Liberation Sans', sans-serif;color:#000;transform:scaleX(0.8981);">10</div>
<div class="t ui" id="t46" style="left:4.50px;top:551.85px;font-size:9px;font-family:'Liberation Sans', sans-serif;color:#000;transform:scaleX(0.8505);">Col: 1</div>
<div class="t ui" id="t47" style="left:43.00px;top:551.85px;font-size:9px;font-family:'Liberation Sans', sans-serif;color:#000;transform:scaleX(0.9082);">Row: 75</div>
<div class="t ui" id="t48" style="left:80.00px;top:551.85px;font-size:9px;font-family:'Liberation Sans', sans-serif;color:#000;transform:scaleX(0.9777);">File#:10215</div>
<div class="t ui" id="t49" style="left:230.50px;top:551.85px;font-size:9px;font-family:'Liberation Sans', sans-serif;color:#000;transform:scaleX(0.8862);">Page: 1</div>
</body></html>
